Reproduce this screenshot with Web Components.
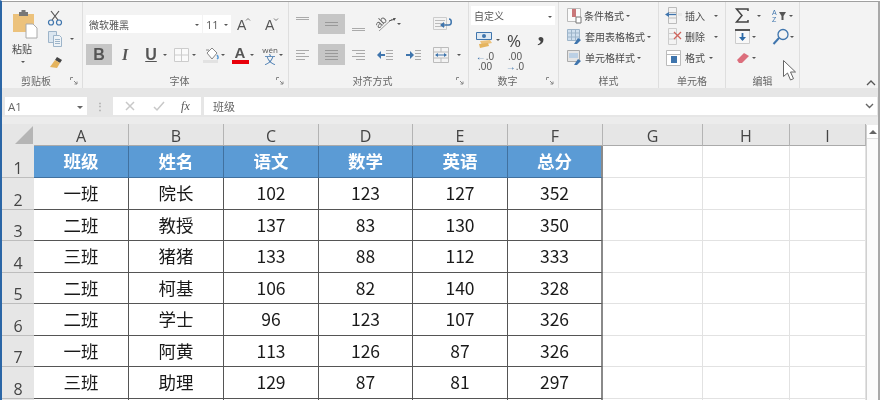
<!DOCTYPE html>
<html lang="zh"><head><meta charset="utf-8"><title>Excel</title>
<style>html,body{margin:0;padding:0;background:#fff}body{width:882px;height:400px;overflow:hidden}</style></head>
<body><x-app></x-app>
<template id="group-t"><style>
:host{display:flex;flex-direction:column;height:86px;box-sizing:border-box;border-right:1px solid #dedede;flex:none}
.c{flex:1;min-height:0}
.l{height:15px;display:flex;align-items:center;font-size:10px;color:#666}
.l span{flex:1;text-align:center}
.l svg{flex:none;margin-right:4px}
</style><div class="c"><slot></slot></div><div class="l"><span id="n"></span></div></template>
<script>
const FONT='"Noto Sans CJK SC","Noto Sans",sans-serif';
const LAT='"Open Sans","Liberation Sans",sans-serif';
class XGroup extends HTMLElement{
  constructor(){super();const s=this.attachShadow({mode:'open'});s.appendChild(document.getElementById('group-t').content.cloneNode(true));}
  connectedCallback(){
    const s=this.shadowRoot;s.getElementById('n').textContent=this.getAttribute('label')||'';
    this.style.width=(this.getAttribute('w')||80)+'px';
    if(this.hasAttribute('launcher')){s.querySelector('.l').insertAdjacentHTML('beforeend','<svg width="8" height="8" viewBox="0 0 8 8" fill="none" stroke="#888"><path d="M.5 3V.5H3M4 4l3 3M7 4.500V7H4.500"/></svg>');}
  }
}
customElements.define('x-group',XGroup);

const ar='<i class="ar"></i>';
const sv=(w,h,b)=>`<svg width="${w}" height="${h}" viewBox="0 0 ${w} ${h}" fill="none" style="overflow:visible">${b}</svg>`;
const lines=(x,ys,w,c='#aaa')=>ys.map(y=>`<path d="M${x} ${y}.5h${w}" stroke="${c}"/>`).join('');
const lset=(rows,c='#aaa')=>sv(14,14,rows.map(([x,y,w])=>`<path d="M${x} ${y}.5h${w}" stroke="${c}"/>`).join(''));
const I={
 paste:sv(30,29,`<path d="M1 5h21v18H1z" fill="#ecc27c"/><path d="M7 3h9v4H7z" fill="#777"/><path d="M9.500 1h4v3h-4z" fill="#777"/><path d="M14 15h7l4 4v10H14z" fill="#fff" stroke="#aaa"/>`),
 cut:sv(14,16,`<path d="M3 1l7 9M11 1L4 10" stroke="#555" stroke-width="1.200"/><circle cx="3" cy="12.500" r="2.500" stroke="#3f75ad" stroke-width="1.200"/><circle cx="11" cy="12.500" r="2.500" stroke="#3f75ad" stroke-width="1.200"/>`),
 copy:sv(15,16,`<path d="M.5.500h8v11h-8z" fill="#dbe6f0" stroke="#9db4c9"/><path d="M5.500 4.500h6l2 2v9h-8z" fill="#eef3f7" stroke="#9db4c9"/>${lines(7,[8,10,12],5,'#9db4c9')}`),
 brush:sv(14,13,`<path d="M8 1l5 3-2 3-5-3z" fill="#444"/><path d="M6 4l5 3-3 5-7-1z" fill="#e5b45e"/>`),
 up:sv(14,14,`<text x="0" y="13" font-size="14" fill="#555" font-family="Liberation Sans">A</text><path d="M9 3.500l2-2 2 2" stroke="#777"/>`),
 dnA:sv(14,14,`<text x="0" y="13" font-size="14" fill="#555" font-family="Liberation Sans">A</text><path d="M9 1.500l2 2 2-2" stroke="#777"/>`),
 borders:sv(15,14,`<path d="M.5.500h14v13H.5zM7.500 0v14M0 7h15" stroke="#ccc" fill="#fafafa"/>`),
 fill:sv(18,18,`<path d="M5 7l5-5 5 5-5 6z" fill="#fff" stroke="#888"/><path d="M4 4h3" stroke="#888"/><path d="M15 9c1.500 2 1.500 3 0 4" stroke="#5b9bd5" stroke-width="1.500"/><path d="M1 15.500h15" stroke="#e2e2e2" stroke-width="3"/>`),
 rot:sv(20,16,`<text x="0" y="0" font-size="11" fill="#666" font-family="Liberation Sans" transform="translate(2 13) rotate(-45)">ab</text><path d="M2 15L15 3" stroke="#999"/><path d="M12 5l6-2" stroke="#555"/><path d="M19 2l-3 0 1 3z" fill="#555"/>`),
 wrap:sv(20,16,`<path d="M.5 1.500h13v12H.5z" stroke="#ccc"/>${lines(2,[4,7,10],10,'#bbb')}<path d="M8 9h8c3 0 3-6 0-6" stroke="#3f75ad" stroke-width="1.500"/><path d="M11 6v6l-4-3z" fill="#3f75ad"/>`),
 indL:sv(17,14,`<path d="M8 7h-6" stroke="#3f75ad" stroke-width="2"/><path d="M4 3v8L0 7z" fill="#3f75ad"/>${lines(9,[2,5,8,11],7)}`),
 indR:sv(17,14,`<path d="M1 7h6" stroke="#3f75ad" stroke-width="2"/><path d="M5 3v8l4-4z" fill="#3f75ad"/>${lines(10,[2,5,8,11],6)}`),
 merge:sv(16,16,`<path d="M.5.500h15v15H.500zM0 5h16M0 11h16M8 0v5M8 11v5" stroke="#bbb"/><path d="M3 8h10" stroke="#3f75ad"/><path d="M5 6v4L2 8zM11 6v4l3-2z" fill="#3f75ad"/>`),
 acct:sv(20,16,`<path d="M.5.500h15v7H.5z" fill="#dfe9f2" stroke="#3f75ad"/><circle cx="8" cy="4" r="2" fill="#3f75ad"/><path d="M4 9l10-1 2 3-10 2z" fill="#ecc27c"/><path d="M3 12l9-1 1 3-9 2z" fill="#e5b45e"/>`),
 cond:sv(15,17,`<path d="M.5 1.500h13v13H.5z" fill="#fafafa" stroke="#bbb"/><path d="M5 2h4v8H5z" fill="#c9787a"/><path d="M9 10h5v6H9z" fill="#fff" stroke="#777"/>`),
 tbl:sv(16,17,`<path d="M.5 1.500h12v11H.5z" fill="#cfdfee" stroke="#9db4c9"/><path d="M0 5h13M0 9h13M4.500 1v11M8.500 1v11" stroke="#9db4c9"/><path d="M7 16l4-6 3 2-4 4z" fill="#3f75ad"/>`),
 cst:sv(16,17,`<path d="M.5 1.500h12v11H.5z" fill="#e5e5e5" stroke="#aaa"/><path d="M2 4h9v5H2z" fill="#bcd0e4"/><path d="M7 16l4-6 3 2-4 4z" fill="#3f75ad"/>`),
 ins:sv(17,17,`<path d="M3.500 .500h8v16h-8z" stroke="#bbb"/><path d="M3 5.500h9M3 11h9" stroke="#bbb"/><path d="M13 6h4v3h-4z" fill="#e8e8e8"/><path d="M11 7.500H3" stroke="#3f75ad" stroke-width="1.300"/><path d="M4 5v5L0 7.500z" fill="#3f75ad"/>`),
 del:sv(17,17,`<path d="M3.500 .500h8v16h-8zM3 5.500h9M3 11h9" stroke="#ccc"/><path d="M9 4l7 7M16 4l-7 7" stroke="#d0645c" stroke-width="1.300"/>`),
 fmt:sv(16,17,`<path d="M.5 1.500h14v15H.5z" fill="#fff" stroke="#bbb"/><path d="M0 5.500h15" stroke="#bbb"/><path d="M5 7h6v7H5z" fill="#3f75ad"/>`),
 sum:sv(14,15,`<path d="M13 3V1H1.500L7 7.500 1.500 14H13v-2" stroke="#444" stroke-width="1.500"/>`),
 sort:sv(17,15,`<text x="0" y="7" font-size="7" fill="#3f75ad" font-family="Liberation Sans">A</text><text x="0" y="14" font-size="7" fill="#3f75ad" font-family="Liberation Sans">Z</text><path d="M7 4h7l-2.500 4v4h-2V8z" fill="#555"/>`),
 dn:sv(15,15,`<path d="M.5 1.500h14v13H.5z" fill="#f8f8f8" stroke="#ccc"/><path d="M0 1h15" stroke="#555" stroke-width="2"/><path d="M7.500 4v7" stroke="#2e6ba8" stroke-width="1.800"/><path d="M4 8h7l-3.500 4z" fill="#2e6ba8"/>`),
 find:sv(18,17,`<circle cx="11" cy="6.500" r="5" stroke="#3f75ad" stroke-width="1.300"/><path d="M7 10l-5.500 6" stroke="#3f75ad" stroke-width="2"/>`),
 eraser:sv(14,12,`<path d="M1 8l7-7 5 3-7 7H3z" fill="#dc6e7c"/>`),
 cursor:sv(13,21,`<path d="M.5.500v16l4-3.500 3 7 3-1.300-3-6.700h5z" fill="#fff" stroke="#666"/>`),
};
class XRibbon extends HTMLElement{
 constructor(){super();const s=this.attachShadow({mode:'open'});
 const t=(w,ml,x)=>`<span class="t" style="width:${w}px;margin-left:${ml}px">${x}</span>`;
 s.innerHTML=`<style>
 :host{display:flex;height:86px;background:#f3f3f3;font-family:${FONT};position:relative;color:#4a4a4a;font-size:10px;filter:blur(.3px)}
 .r{display:flex;align-items:center}
 .t{display:inline-flex;align-items:center;justify-content:center;flex:none;height:100%;white-space:nowrap}
 .ar{display:inline-block;width:0;height:0;border:2px solid transparent;border-top:2px solid #555;border-bottom:0;flex:none}
 .box{background:#fff;justify-content:flex-start;padding-left:3px;box-sizing:border-box;color:#555}
 .sel{background:#c6c6c6}
 .lat{font-family:${LAT}}
 .col{display:flex;flex-direction:column}
 .st{justify-content:flex-start;gap:2px}
 .pct{font:17px ${LAT};color:#444}
 .cm{font:bold 28px/20px "Liberation Serif",serif;color:#444;margin-top:-17px}
 .num{font:10px/10px "Liberation Sans",sans-serif;color:#555;text-align:center}
 .arr{color:#3f75ad;font-weight:700}
 .big{font:bold 16px "Liberation Sans",sans-serif;color:#555}
 .wen{display:grid;justify-items:center;font:8px/9px ${LAT};color:#555}
 .wen b{font:400 11px/11px ${FONT};color:#3f75ad}
 #cur{position:absolute;left:781px;top:58px}
 #chev{position:absolute;left:864px;top:78px}
 </style>
 <x-group w="81" label="剪贴板" launcher>
  <div style="display:flex">
   <div class="col" style="width:36px;margin-left:10px;padding-top:7px;align-items:center"><span style="margin-left:-6px">${I.paste}</span><span style="font-size:10px;line-height:14px;margin:1px 0 0 -16px">粘贴</span><span style="margin:3px 0 0 -14px;line-height:0">${ar}</span></div>
   <div class="col" style="padding-top:7px">
    <div class="r" style="height:17px">${t(14,0,I.cut)}</div>
    <div class="r" style="height:16px;margin-top:5px">${t(15,0,I.copy)}${t(4,7,ar)}</div>
    <div class="r" style="height:14px;margin-top:8px;margin-left:1px">${I.brush}</div>
   </div>
  </div>
 </x-group>
 <x-group w="206" label="字体" launcher>
  <div style="padding-top:13px">
   <div class="r" style="height:18px">${t(116,3,`<span class="t box" style="width:100%">微软雅黑<span style="margin-left:auto;margin-right:3px;line-height:0">${ar}</span></span>`)}${t(28,1,`<span class="t box lat" style="width:100%;font-size:11px">11<span style="margin-left:auto;margin-right:3px;line-height:0">${ar}</span></span>`)}${t(14,6,I.up)}${t(14,14,I.dnA)}</div>
   <div class="r" style="height:21px;margin-top:11px">${t(26,3,`<span class="t sel big" style="width:100%">B</span>`)}${t(10,8,`<span style="font:italic bold 16px 'Liberation Serif';color:#555">I</span>`)}${t(12,15,`<span class="big" style="text-decoration:underline">U</span>`)}${t(4,6,ar)}${t(15,7,I.borders)}${t(4,3,ar)}${t(18,6,I.fill)}${t(4,1,ar)}${t(16,7,`<span class="col" style="align-items:center;font:bold 15px/15px 'Liberation Sans';color:#555">A<span style="width:17px;height:4px;background:#e8000a"></span></span>`)}${t(4,2,ar)}${t(18,7,`<span class="wen">wén<b>文</b></span>`)}${t(4,0,ar)}</div>
  </div>
 </x-group>
 <x-group w="180" label="对齐方式" launcher>
  <div style="padding-top:12px">
   <div class="r" style="height:20px">${t(14,7,lset([[0,0,13],[0,2,13]]))}${t(27,8,`<span class="t sel" style="width:100%">${sv(14,6,lines(0,[1,4],13,'#999'))}</span>`)}${t(14,7,lset([[0,11,13],[0,13,13]]))}${t(20,11,I.rot)}${t(4,0,ar)}${t(20,32,I.wrap)}</div>
   <div class="r" style="height:21px;margin-top:10px">${t(14,7,lset([[0,2,13],[0,5,9],[0,8,13],[0,11,9]]))}${t(27,8,`<span class="t sel" style="width:100%">${sv(14,11,lines(0,[1,4,7,10],13,'#999'))}</span>`)}${t(14,7,lset([[0,2,13],[4,5,9],[0,8,13],[4,11,9]]))}${t(17,11,I.indL)}${t(17,11,I.indR)}${t(16,11,I.merge)}${t(4,8,ar)}</div>
  </div>
 </x-group>
 <x-group w="90" label="数字" launcher>
  <div style="padding-top:4px">
   <div class="r" style="height:19px">${t(84,2,`<span class="t box" style="width:100%">自定义<span style="margin-left:auto;margin-right:3px;line-height:0">${ar}</span></span>`)}</div>
   <div class="r" style="height:20px;margin-top:5px">${t(20,7,I.acct)}${t(4,0,ar)}${t(14,7,`<span class="pct">%</span>`)}${t(8,16,`<span class="cm">,</span>`)}</div>
   <div class="r" style="height:18px;margin-top:3px">${t(16,8,`<span class="num"><span class="arr">←</span>.0<br>.00</span>`)}${t(16,14,`<span class="num">.00<br><span class="arr">→</span>.0</span>`)}</div>
  </div>
 </x-group>
 <x-group w="100" label="样式">
  <div style="padding-top:3px">
   <div class="r" style="height:21px">${t(90,8,`<span class="t st" style="width:100%">${I.cond}<span>条件格式</span>${ar}</span>`)}</div>
   <div class="r" style="height:21px">${t(90,8,`<span class="t st" style="width:100%">${I.tbl}<span>套用表格格式</span>${ar}</span>`)}</div>
   <div class="r" style="height:21px">${t(90,8,`<span class="t st" style="width:100%">${I.cst}<span>单元格样式</span>${ar}</span>`)}</div>
  </div>
 </x-group>
 <x-group w="67" label="单元格">
  <div style="padding-top:3px">
   <div class="r" style="height:21px">${t(17,6,I.ins)}${t(20,3,'插入')}${t(4,9,ar)}</div>
   <div class="r" style="height:21px">${t(17,6,I.del)}${t(20,3,'删除')}${t(4,9,ar)}</div>
   <div class="r" style="height:21px">${t(16,7,I.fmt)}${t(20,3,'格式')}${t(4,4,ar)}</div>
  </div>
 </x-group>
 <x-group w="74" label="编辑">
  <div style="padding-top:3px">
   <div class="r" style="height:21px">${t(14,9,I.sum)}${t(4,8,ar)}${t(17,11,I.sort)}${t(4,0,ar)}</div>
   <div class="r" style="height:21px">${t(15,9,I.dn)}${t(4,2,ar)}${t(18,16,I.find)}${t(4,0,ar)}</div>
   <div class="r" style="height:21px">${t(14,10,I.eraser)}${t(4,2,ar)}</div>
  </div>
 </x-group>
 <span id="cur">${I.cursor}</span>
 <svg id="chev" width="10" height="6" viewBox="0 0 10 6" fill="none" stroke="#555" stroke-width="1.300"><path d="M1 5l4-4 4 4"/></svg>`;
 }
}
customElements.define('x-ribbon',XRibbon);

class XFormula extends HTMLElement{
 constructor(){super();const s=this.attachShadow({mode:'open'});
 s.innerHTML=`<style>
 :host{display:flex;height:29px;background:#e6e6e6;padding:9px 1px 2px 3px;box-sizing:border-box;font:11px ${FONT};color:#666;align-items:stretch;filter:blur(.25px)}
 .b{background:#fff;display:flex;align-items:center;box-sizing:border-box}
 #name{width:82px;padding:0 4px 0 3px;justify-content:space-between;font-family:${LAT};font-size:11.500px}
 .ar{width:0;height:0;border:3px solid transparent;border-top:3px solid #666;border-bottom:0;margin-top:2px}
 #dots{width:26px;display:flex;align-items:center;justify-content:center;color:#aaa;font:bold 10px ${LAT};line-height:5px;flex-direction:column}
 #btn{width:88px;justify-content:space-around;padding:0 3px}
 #val{flex:1;margin-left:3px;padding-left:9px;font-size:11px;justify-content:space-between;padding-right:3px}
 </style>
 <div class="b" id="name"><span>A1</span><span class="ar"></span></div>
 <div id="dots">⋮</div>
 <div class="b" id="btn">
  <svg width="12" height="12" viewBox="0 0 12 12" fill="none" stroke="#c8c8c8" stroke-width="1.500"><path d="M2 2l8 8M10 2l-8 8"/></svg>
  <svg width="12" height="12" viewBox="0 0 12 12" fill="none" stroke="#c8c8c8" stroke-width="1.500"><path d="M1 7l3 3 7-8"/></svg>
  <span style="font:italic 12px 'Liberation Serif';color:#555">fx</span>
 </div>
 <div class="b" id="val"><span>班级</span><svg width="9" height="6" viewBox="0 0 9 6" fill="none" stroke="#666" stroke-width="1.400"><path d="M1 1l3.500 3.500L8 1"/></svg></div>`;
 }
}
customElements.define('x-formula',XFormula);

const DATA=[["班级","姓名","语文","数学","英语","总分"],["一班","院长",102,123,127,352],["二班","教授",137,83,130,350],["三班","猪猪",133,88,112,333],["二班","柯基",106,82,140,328],["二班","学士",96,123,107,326],["一班","阿黄",113,126,87,326],["三班","助理",129,87,81,297],["","","","","",""]];
class XSheet extends HTMLElement{
 constructor(){super();const s=this.attachShadow({mode:'open'});
 let h='<div class="corner"><svg width="19" height="19" viewBox="0 0 19 19"><path d="M18 0v18H0z" fill="#b5b5b5"/></svg></div>';
 "ABCDEFGHI".split('').forEach(c=>h+=`<div class="ch">${c}</div>`);
 DATA.forEach((r,i)=>{
  h+=`<div class="rh">${i<8?i+1:''}</div>`;
  r.forEach((v,j)=>{h+=`<div class="${i==0?'c hd':'c'}${j==5?' last':''}">${v}</div>`;});
  h+='<div class="e"></div><div class="e"></div><div class="e"></div>';
 });
 s.innerHTML=`<style>
 :host{display:flex;flex:1;min-height:0;background:#ececec;padding-top:7px;overflow:hidden}
 #g{display:grid;grid-template-columns:32px 95px 95px 95px 94px 95px 95px 100px 87px 76px;grid-template-rows:22px 32px repeat(8,31.57px);width:864px;background:#fff;flex:none;filter:blur(.25px)}
 .corner{background:#e6e6e6;display:flex;justify-content:flex-end;align-items:flex-end;padding:0 0 1px 0}
 .ch{background:#e6e6e6;border-right:1px solid #b4b4b4;border-bottom:1px solid #aaa;font:16px/24px ${LAT};color:#444;text-align:center;box-sizing:border-box}
 .rh{background:#e6e6e6;border-bottom:1px solid #bdbdbd;font:16px/18px ${LAT};color:#444;box-sizing:border-box;display:flex;align-items:flex-end;justify-content:center}
 .c{border-right:1px solid #555;border-bottom:1px solid #555;box-sizing:border-box;font:17.500px/30px ${FONT};color:#1a1a1a;text-align:center;background:#fff;white-space:nowrap}
 .hd{background:#5b9bd5;color:#fff;font-weight:700;border-color:#41719f}
 .last{border-right:2px solid #8a8a8a}
 .e{border-right:1px solid #e2e2e2;border-bottom:1px solid #e2e2e2;box-sizing:border-box}
 #sb{flex:1;background:#fbfbfb;border-left:1px solid #d0d0d0;box-sizing:border-box;margin-top:1px}
 #sb div{height:13px;display:flex;align-items:center;justify-content:center;background:#fff;border-bottom:1px solid #e0e0e0}
 #sb i{width:0;height:0;border:4px solid transparent;border-bottom:4px solid #666;border-top:0}
 </style><div id="g">${h}</div><div id="sb"><div><i></i></div></div>`;
 }
}
customElements.define('x-sheet',XSheet);

class XApp extends HTMLElement{
 constructor(){super();const s=this.attachShadow({mode:'open'});
 s.innerHTML=`<style>
 :host{display:flex;width:882px;height:400px;box-sizing:border-box;border-left:2px solid #2b66a6;border-right:2px solid #fff;border-top:1px solid #fff;overflow:hidden}
 #w{flex:1;min-width:0;display:flex;flex-direction:column;border-top:1px solid #a0a0a0;border-right:2px solid #a8a8a8}
 </style><div id="w"><x-ribbon></x-ribbon><x-formula></x-formula><x-sheet></x-sheet></div>`;
 }
}
customElements.define('x-app',XApp);
</script>
</body></html>
